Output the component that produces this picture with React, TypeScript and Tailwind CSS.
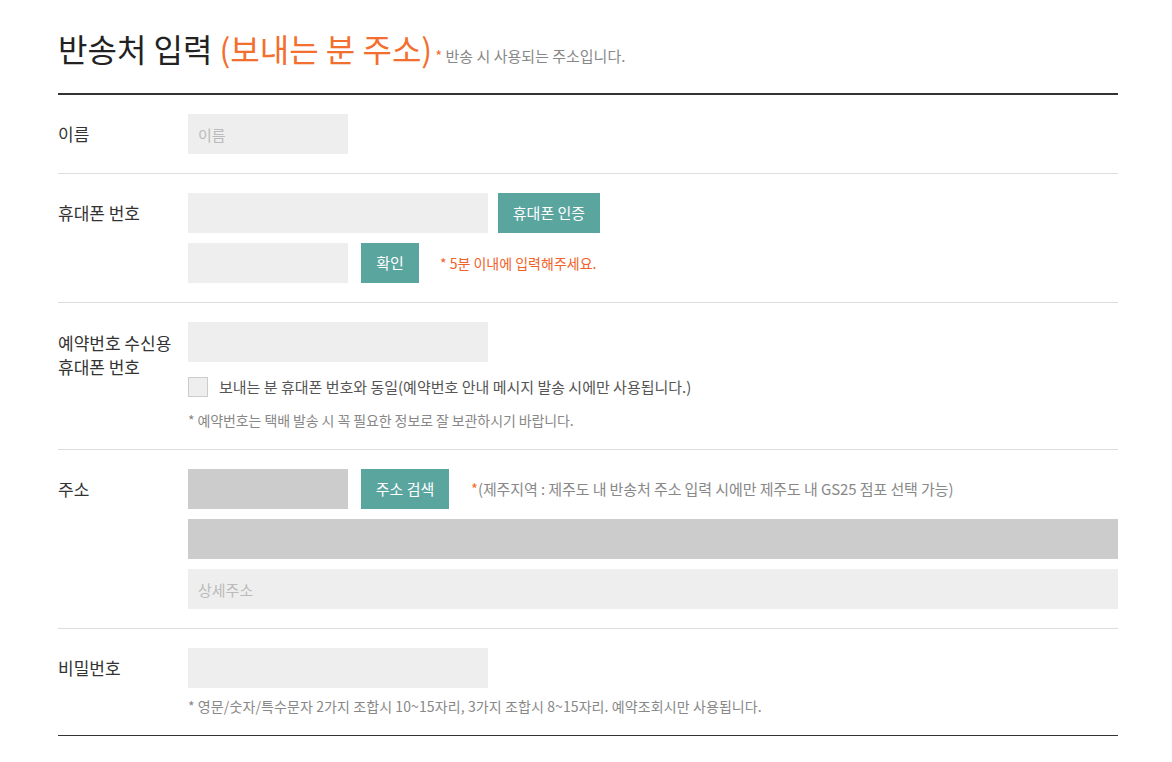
import React from 'react';

const font = { fontFamily: '"Noto Sans CJK KR", "Noto Sans", sans-serif' };

function Row({ label, children, last }: { label: React.ReactNode; children: React.ReactNode; last?: boolean }) {
  return (
    <div className={`flex py-[19px] border-b ${last ? 'border-[#333]' : 'border-[#dddddd]'}`}>
      <div className="w-[130px] shrink-0 text-[17px] text-[#333]">{label}</div>
      <div className="flex-1 flex flex-col">{children}</div>
    </div>
  );
}

function Field({ w, placeholder, dark }: { w: string; placeholder?: string; dark?: boolean }) {
  return (
    <input
      className={`${w} h-[40px] px-[10px] text-[15px] outline-none ${dark ? 'bg-[#cccccc]' : 'bg-[#eeeeee]'} placeholder:text-[#bbbbbb]`}
      placeholder={placeholder}
      style={font}
    />
  );
}

function Btn({ children, w }: { children: React.ReactNode; w: string }) {
  return (
    <button className={`${w} h-[40px] bg-[#5ba59f] text-white text-[15px]`} style={font}>
      {children}
    </button>
  );
}

export default function App() {
  return (
    <div className="bg-white min-h-[762px]" style={font}>
      <div className="ml-[58px] w-[1060px] pt-[27px]">
        <div className="flex items-baseline pb-[24px] border-b-2 border-[#333]">
          <h1 className="text-[32px] leading-[42px] text-[#222]">
            반송처 입력 <span className="text-[#f36f2f]">(보내는 분 주소)</span>
          </h1>
          <span className="ml-[3px] text-[15px] text-[#888]">
            <span className="text-[#f36f2f]">*</span> 반송 시 사용되는 주소입니다.
          </span>
        </div>

        <Row label={<div className="leading-[40px]">이름</div>}>
          <Field w="w-[160px]" placeholder="이름" />
        </Row>

        <Row label={<div className="leading-[40px]">휴대폰 번호</div>}>
          <div className="flex gap-[10px]">
            <Field w="w-[300px]" />
            <Btn w="w-[102px]">휴대폰 인증</Btn>
          </div>
          <div className="flex items-center mt-[10px]">
            <Field w="w-[160px]" />
            <div className="ml-[13px]">
              <Btn w="w-[58px]">확인</Btn>
            </div>
            <span className="ml-[21px] text-[14px] text-[#f0622a]">* 5분 이내에 입력해주세요.</span>
          </div>
        </Row>

        <Row label={<div className="pt-[9px] leading-[24px]">예약번호 수신용<br />휴대폰 번호</div>}>
          <Field w="w-[300px]" />
          <label className="flex items-center mt-[15px]">
            <span className="w-[20px] h-[20px] bg-[#eeeeee] border border-[#cccccc]" />
            <span className="ml-[11px] text-[15px] leading-[20px] text-[#555]">
              보내는 분 휴대폰 번호와 동일(예약번호 안내 메시지 발송 시에만 사용됩니다.)
            </span>
          </label>
          <p className="mt-[13px] text-[14px] leading-[20px] text-[#888] tracking-[-0.1px]">
            * 예약번호는 택배 발송 시 꼭 필요한 정보로 잘 보관하시기 바랍니다.
          </p>
        </Row>

        <Row label={<div className="leading-[40px]">주소</div>}>
          <div className="flex items-center">
            <Field w="w-[160px]" dark />
            <div className="ml-[13px]">
              <Btn w="w-[88px]">주소 검색</Btn>
            </div>
            <span className="ml-[22px] text-[15px] text-[#888] tracking-[-0.1px]">
              <span className="text-[#f36f2f]">*</span>(제주지역 : 제주도 내 반송처 주소 입력 시에만 제주도 내 GS25 점포 선택 가능)
            </span>
          </div>
          <div className="mt-[10px]">
            <Field w="w-full" dark />
          </div>
          <div className="mt-[10px]">
            <Field w="w-full" placeholder="상세주소" />
          </div>
        </Row>

        <Row label={<div className="leading-[40px]">비밀번호</div>} last>
          <Field w="w-[300px]" />
          <p className="mt-[8px] text-[14px] leading-[20px] text-[#888] tracking-[0.1px]">
            * 영문/숫자/특수문자 2가지 조합시 10~15자리, 3가지 조합시 8~15자리. 예약조회시만 사용됩니다.
          </p>
        </Row>
      </div>
    </div>
  );
}
